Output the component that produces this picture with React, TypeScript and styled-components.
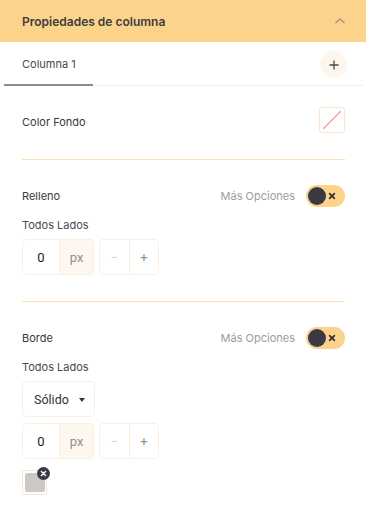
import React, { FC, Fragment } from 'react'
import styled, { createGlobalStyle } from 'styled-components'

const GlobalStyle = createGlobalStyle`
  html, body {
    margin: 0;
    padding: 0;
    background: #ffffff;
  }
  body {
    font-family: Inter, "Noto Sans", sans-serif;
    color: #3a3a3a;
  }
  * {
    box-sizing: border-box;
  }
`

const Panel = styled.div`
  width: 366px;
  background: #ffffff;
`

const Header = styled.div`
  height: 42px;
  display: flex;
  align-items: center;
  justify-content: space-between;
  padding: 0 20px 0 22px;
  background: #fcd38b;
`

const Title = styled.h3`
  margin: 0;
  font-size: 12px;
  font-weight: 600;
  color: #3d3d3d;
`

const TabBar = styled.div`
  margin: 0 3px 0 4px;
  height: 44px;
  display: flex;
  align-items: stretch;
  justify-content: space-between;
  border-bottom: 1px solid #fcecd8;
`

const Tab = styled.div<{ active?: boolean }>`
  width: 89px;
  display: flex;
  align-items: center;
  padding: 2px 0 0 18px;
  font-size: 11px;
  color: #4a4a4a;
  margin-bottom: -1px;
  border-bottom: 2px solid ${(p) => (p.active ? '#8d8b96' : 'transparent')};
`

const RoundButton = styled.button`
  align-self: center;
  width: 27px;
  height: 27px;
  margin: 2px 16px 0 0;
  border: none;
  border-radius: 50%;
  background: #fdf6ef;
  display: flex;
  align-items: center;
  justify-content: center;
  padding: 0;
  cursor: pointer;
`

const Content = styled.div`
  padding: 0 21px 0 22px;
`

const Section = styled.section<{ top: number }>`
  padding-top: ${(p) => p.top}px;
  padding-bottom: 26px;
  border-bottom: 1px solid #fcdfae;
  &:last-child {
    border-bottom: none;
  }
`

const Row = styled.div`
  display: flex;
  align-items: center;
  justify-content: space-between;
`

const Label = styled.span<{ drop?: number }>`
  margin-top: ${(p) => p.drop || 0}px;
  font-size: 11px;
  font-weight: 400;
  color: #3a3a3a;
`

const SubLabel = styled.div`
  margin-top: 10px;
  font-size: 11px;
  line-height: 16px;
  color: #4a4a4a;
`

const Options = styled.div`
  display: flex;
  align-items: center;
  gap: 11px;
  font-size: 11px;
  color: #9c9ba3;
`

const Toggle = styled.div`
  width: 39px;
  height: 22px;
  border-radius: 11px;
  background: #fcd38b;
  display: flex;
  align-items: center;
  justify-content: space-between;
  padding: 0 9px 0 2px;
`

const Knob = styled.span`
  width: 18px;
  height: 18px;
  border-radius: 50%;
  background: #3b3944;
`

const Swatch = styled.div<{ size: number }>`
  width: ${(p) => p.size}px;
  height: ${(p) => p.size}px;
  border: 1px solid #fbe6cc;
  border-radius: 3px;
  background: #ffffff;
  display: flex;
  align-items: center;
  justify-content: center;
  position: relative;
`

const SwatchFill = styled.span`
  width: 20px;
  height: 19px;
  border-radius: 2px;
  background: #c9c9c9;
`

const Badge = styled.span`
  position: absolute;
  top: -4px;
  right: -4px;
  width: 13px;
  height: 13px;
  border-radius: 50%;
  background: #3b3944;
  display: flex;
  align-items: center;
  justify-content: center;
`

const Controls = styled.div<{ gap: number }>`
  margin-top: ${(p) => p.gap}px;
  display: flex;
  gap: 5px;
`

const Group = styled.div`
  display: flex;
  height: 36px;
  border: 1px solid #fcefdf;
  border-radius: 4px;
  overflow: hidden;
`

const Cell = styled.div<{ w: number; shade?: boolean; tone?: string }>`
  width: ${(p) => p.w}px;
  display: flex;
  align-items: center;
  justify-content: center;
  font-family: Roboto, "Liberation Sans", sans-serif;
  font-size: 13px;
  color: ${(p) => p.tone || '#222222'};
  background: ${(p) => (p.shade ? '#fdf7ef' : '#ffffff')};
  & + & {
    border-left: 1px solid #fcefdf;
  }
`

const Select = styled.div`
  margin-top: 6px;
  width: 73px;
  height: 36px;
  border: 1px solid #fcefdf;
  border-radius: 4px;
  display: flex;
  align-items: center;
  padding-left: 11px;
  gap: 10px;
  font-family: Roboto, "Liberation Sans", sans-serif;
  font-size: 12.5px;
  color: #333333;
`

const Caret = styled.span`
  width: 0;
  height: 0;
  margin-top: 1px;
  border-left: 3.5px solid transparent;
  border-right: 3.5px solid transparent;
  border-top: 4px solid #333333;
`

const SwatchRow = styled.div`
  margin-top: 11px;
  display: flex;
`

const Cross: FC<{ size: number; color: string; width?: number }> = ({ size, color, width = 2 }) => (
  <svg width={size} height={size} viewBox="0 0 10 10">
    <path d="M2 2 L8 8 M8 2 L2 8" stroke={color} strokeWidth={width} strokeLinecap="round" />
  </svg>
)

const ToggleRow: FC<{ label: string }> = ({ label }) => (
  <Row>
    <Label>{label}</Label>
    <Options>
      Más Opciones
      <Toggle>
        <Knob />
        <Cross size={8} color="#2e2c36" width={2} />
      </Toggle>
    </Options>
  </Row>
)

const SizeInput: FC<{ gap: number }> = ({ gap }) => (
  <Controls gap={gap}>
    <Group>
      <Cell w={36}>0</Cell>
      <Cell w={34} shade tone="#8f8f8f">px</Cell>
    </Group>
    <Group>
      <Cell w={29} tone="#d6d6d6">−</Cell>
      <Cell w={29} tone="#8f8f8f">+</Cell>
    </Group>
  </Controls>
)

const App: FC = () => {
  return (
    <Fragment>
      <GlobalStyle />
      <Panel>
        <Header>
          <Title>Propiedades de columna</Title>
          <svg width="12" height="8" viewBox="0 0 12 8">
            <path d="M1.5 6 L6 2 L10.5 6" fill="none" stroke="#9a917f" strokeWidth="1.2" />
          </svg>
        </Header>
        <TabBar>
          <Tab active>Columna 1</Tab>
          <RoundButton>
            <svg width="10" height="10" viewBox="0 0 10 10">
              <path d="M5 0.5 V9.5 M0.5 5 H9.5" stroke="#4a4a4a" strokeWidth="1.3" />
            </svg>
          </RoundButton>
        </TabBar>
        <Content>
          <Section top={21}>
            <Row>
              <Label drop={4}>Color Fondo</Label>
              <Swatch size={26}>
                <svg width="24" height="24" viewBox="0 0 24 24">
                  <path d="M3 21 L21 3" stroke="#f2a0a0" strokeWidth="1.2" />
                </svg>
              </Swatch>
            </Row>
          </Section>
          <Section top={25}>
            <ToggleRow label="Relleno" />
            <SubLabel>Todos Lados</SubLabel>
            <SizeInput gap={6} />
          </Section>
          <Section top={25}>
            <ToggleRow label="Borde" />
            <SubLabel>Todos Lados</SubLabel>
            <Select>
              Sólido
              <Caret />
            </Select>
            <SizeInput gap={6} />
            <SwatchRow>
              <Swatch size={25}>
                <SwatchFill />
                <Badge>
                  <Cross size={7} color="#ffffff" width={2} />
                </Badge>
              </Swatch>
            </SwatchRow>
          </Section>
        </Content>
      </Panel>
    </Fragment>
  )
}

export default App
